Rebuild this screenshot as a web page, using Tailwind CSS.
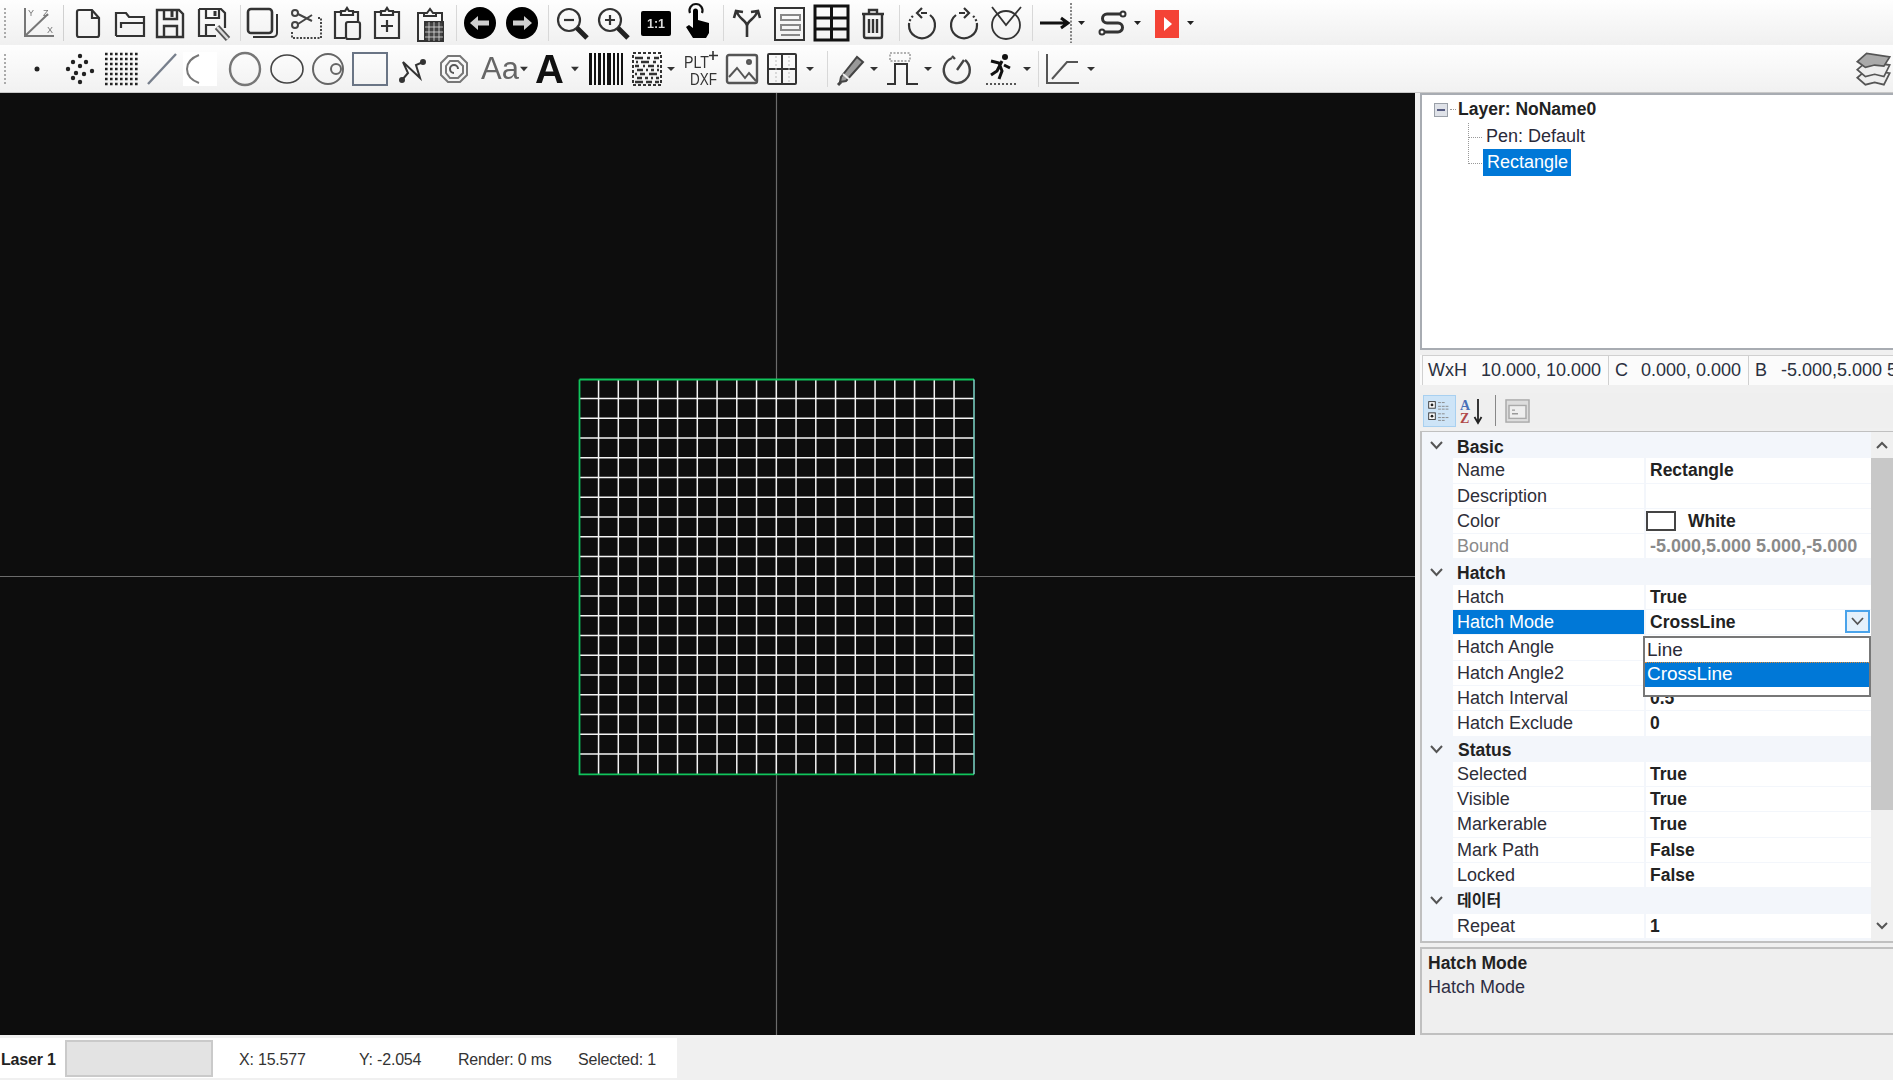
<!DOCTYPE html>
<html>
<head>
<meta charset="utf-8">
<script src="https://cdn.jsdelivr.net/npm/@tailwindcss/browser@4"></script>
</head>
<body class="m-0 overflow-hidden bg-[#f0f0f0]">
<div class="w-[1893px] h-[1080px] flex flex-col font-['Liberation_Sans','Noto_Sans_CJK_KR',sans-serif] text-[18px] text-[#222] bg-[#f0f0f0]">

<!-- toolbar 1 -->
<div class="h-[45px] flex items-center pl-[4px] bg-linear-to-b from-[#fefefe] to-[#f0f0f0] blur-[0.5px]">
  <div class="w-[3px] h-[30px] border-l-2 border-dotted border-[#aaa]"></div>
  <svg class="ml-[15px] w-[41px] h-8 overflow-visible" viewBox="0 0 32 32" preserveAspectRatio="xMinYMid meet" fill="none" stroke="#777" stroke-width="2"><path d="M3 1v28h29M3 29L26 7"/><text x="6" y="9" font-size="9" fill="#777" stroke="none">Y</text><text x="21" y="9" font-size="9" fill="#777" stroke="none">Z</text><text x="25" y="26" font-size="9" fill="#777" stroke="none">X</text></svg>
  <div class="w-px h-[36px] bg-[#d0d0d0]"></div>
  <svg class="ml-[8px] w-[42px] h-8 overflow-visible" viewBox="0 0 32 32" preserveAspectRatio="xMinYMid meet" fill="none" stroke="#333" stroke-width="2.200"><path d="M5 5a2 2 0 0 1 2-2h13l7 8v17a2 2 0 0 1-2 2H7a2 2 0 0 1-2-2zM20 3v8h7"/></svg>
  <svg class="w-[40px] h-8 overflow-visible" viewBox="0 0 32 32" preserveAspectRatio="xMinYMid meet" fill="none" stroke="#333" stroke-width="2.200"><path d="M2 29V6h10l3 4h15v6M2 29h28V16H7v5"/></svg>
  <svg class="w-[43px] h-8 overflow-visible" viewBox="0 0 32 32" preserveAspectRatio="xMinYMid meet" fill="none" stroke="#333" stroke-width="2.400"><path d="M3 3h22l4 4v23H3zM10 3v9h13V3M10 30V19h13v11"/><path d="M18 4v6" stroke-width="3"/></svg>
  <svg class="w-[43px] h-8 overflow-visible" viewBox="0 0 32 32" preserveAspectRatio="xMinYMid meet" fill="none" stroke="#333" stroke-width="2.200"><path d="M2 2h22l4 4v15M2 2v27h17M9 2v9h13V2M9 29V18h9"/><path d="M18 4v5" stroke-width="3"/><path d="M20 20l11 12" stroke="#555" stroke-width="6"/><path d="M20 20l11 12" stroke="#ddd" stroke-width="2.500"/></svg>
  <div class="w-px h-[36px] bg-[#d8d8d8]"></div>
  <svg class="ml-[5px] w-[44px] h-8 overflow-visible" viewBox="0 0 32 32" preserveAspectRatio="xMinYMid meet" fill="none" stroke="#333" stroke-width="2"><rect x="2" y="2" width="24" height="24" rx="3" stroke-width="2.600"/><path d="M7 30h20a4 4 0 0 0 4-4V7"/></svg>
  <svg class="w-[41px] h-8 overflow-visible" viewBox="0 0 32 32" preserveAspectRatio="xMinYMid meet" fill="none" stroke="#444" stroke-width="2"><circle cx="5" cy="6" r="3"/><circle cx="5" cy="18" r="3"/><path d="M8 7l14 7M8 17l14-9"/><path d="M2 25v6h29V11h-4" stroke-dasharray="2 1.500"/></svg>
  <svg class="w-[40px] h-8 overflow-visible" viewBox="0 0 32 32" preserveAspectRatio="xMinYMid meet" fill="none" stroke="#333" stroke-width="2.200"><path d="M10 5H4v26h10M22 5h5v9"/><path d="M10 8V4h4l2-3 2 3h4v4z"/><rect x="15" y="15" width="14" height="17" rx="2"/></svg>
  <svg class="w-[43px] h-8 overflow-visible" viewBox="0 0 32 32" preserveAspectRatio="xMinYMid meet" fill="none" stroke="#333" stroke-width="2.200"><path d="M10 5H4v26h24V5h-6"/><path d="M10 8V4h4l2-3 2 3h4v4z"/><path d="M16 13v12M10 19h12"/></svg>
  <svg class="w-[42px] h-8 overflow-visible" viewBox="0 0 32 32" preserveAspectRatio="xMinYMid meet" fill="none" stroke="#333" stroke-width="2"><path d="M10 6H4v28h24V6h-6"/><path d="M10 9V6h3l3-4 3 4h3v3z"/><rect x="11" y="15" width="18" height="19" fill="#444"/><path d="M15 15v19M20 15v19M25 15v19M11 20h18M11 25h18M11 30h18" stroke="#ddd" stroke-width="0.800"/></svg>
  <div class="w-px h-[36px] bg-[#d8d8d8]"></div>
  <svg class="ml-[7px] w-[42px] h-8 overflow-visible" viewBox="0 0 32 32" preserveAspectRatio="xMinYMid meet"><circle cx="16" cy="16" r="16" fill="#000"/><path d="M6 16l8-7v4.500h11v5H14v4.500z" fill="#cfcfcf"/></svg>
  <svg class="w-[42px] h-8 overflow-visible" viewBox="0 0 32 32" preserveAspectRatio="xMinYMid meet"><circle cx="16" cy="16" r="16" fill="#000"/><path d="M26 16l-8-7v4.500H7v5h11v4.500z" fill="#cfcfcf"/></svg>
  <div class="w-px h-[36px] bg-[#d8d8d8]"></div>
  <svg class="ml-[7px] w-[41px] h-8 overflow-visible" viewBox="0 0 32 32" preserveAspectRatio="xMinYMid meet" fill="none" stroke="#333" stroke-width="2.200"><circle cx="13" cy="13" r="11"/><path d="M21 21l10 10" stroke-width="5" stroke="#222"/><path d="M8 13h10"/></svg>
  <svg class="w-[43px] h-8 overflow-visible" viewBox="0 0 32 32" preserveAspectRatio="xMinYMid meet" fill="none" stroke="#333" stroke-width="2.200"><circle cx="13" cy="13" r="11"/><path d="M21 21l10 10" stroke-width="5" stroke="#222"/><path d="M8 13h10M13 8v10"/></svg>
  <svg class="w-[41px] h-8 overflow-visible" viewBox="0 0 32 32" preserveAspectRatio="xMinYMid meet"><rect x="1" y="4" width="30" height="25" rx="2" fill="#000"/><text x="16" y="21" font-size="12.500" font-weight="700" fill="#ddd" text-anchor="middle" font-family="Liberation Sans">1:1</text></svg>
  <svg class="w-[42px] h-8 overflow-visible" viewBox="0 0 32 32" preserveAspectRatio="xMinYMid meet" fill="none" stroke="#111" stroke-width="2.200"><path d="M9 6a6.500 6.500 0 1 1 12 0"/><path d="M12 31L5 20l3-2 4 3V4a2.500 2.500 0 0 1 5 0v9l11 3v10l-3 5z" fill="#000" stroke="none"/></svg>
  <div class="w-px h-[36px] bg-[#d8d8d8]"></div>
  <svg class="ml-[7px] w-[42px] h-8 overflow-visible" viewBox="0 0 32 32" preserveAspectRatio="xMinYMid meet" fill="none" stroke="#333" stroke-width="2.600"><path d="M16 30V19C16 14 8 12 6 5M16 19c0-5 8-7 10-14M3 11l2-7 7 1M29 11l-2-7-7 1"/></svg>
  <svg class="w-[42px] h-8 overflow-visible" viewBox="0 0 32 32" preserveAspectRatio="xMinYMid meet" fill="none" stroke="#333" stroke-width="2"><rect x="2" y="1" width="29" height="32"/><path d="M8 8h19v5H8zM8 18h19v5H8zM8 28h19" stroke="#888"/></svg>
  <svg class="w-[42px] h-8 overflow-visible" viewBox="0 0 32 32" preserveAspectRatio="xMinYMid meet" fill="none" stroke="#111" stroke-width="3"><rect x="0" y="-1" width="33" height="34"/><path d="M16.500 -1v34M0 11h33M0 22h33"/></svg>
  <svg class="w-[42px] h-8 overflow-visible" viewBox="0 0 32 32" preserveAspectRatio="xMinYMid meet" fill="none" stroke="#333" stroke-width="2.400"><path d="M5 7h22M12 7V3h8v4M7 7v22a2 2 0 0 0 2 2h14a2 2 0 0 0 2-2V7M12 12v14M16 12v14M20 12v14"/></svg>
  <div class="w-px h-[36px] bg-[#d8d8d8]"></div>
  <svg class="ml-[6px] w-[42px] h-8 overflow-visible" viewBox="0 0 32 32" preserveAspectRatio="xMinYMid meet" fill="none" stroke="#333" stroke-width="2.200"><path d="M24 8a13 13 0 1 1-21 10"/><path d="M3 18A13 13 0 0 1 8 8" stroke-dasharray="2 2"/><path d="M21 6h-6M16 1l-5 5 5 5"/></svg>
  <svg class="w-[42px] h-8 overflow-visible" viewBox="0 0 32 32" preserveAspectRatio="xMinYMid meet" fill="none" stroke="#333" stroke-width="2.200"><path d="M8 8a13 13 0 1 0 21 10"/><path d="M29 18a13 13 0 0 0-5-10" stroke-dasharray="2 2"/><path d="M11 6h6M16 1l5 5-5 5"/></svg>
  <svg class="w-[42px] h-8 overflow-visible" viewBox="0 0 32 32" preserveAspectRatio="xMinYMid meet" fill="none" stroke="#333" stroke-width="1.800"><circle cx="16" cy="18" r="14"/><path d="M2 0l14 18L31 0"/></svg>
  <div class="w-px h-[36px] bg-[#d8d8d8]"></div>
  <svg class="ml-[7px] w-[56px] h-8 overflow-visible" viewBox="0 0 32 32" preserveAspectRatio="xMinYMid meet" fill="none" stroke="#111" stroke-width="3"><path d="M0 16h27M21 11l7 5-7 5"/><path d="M31 -4v40" stroke-width="1" stroke-dasharray="2 1.500"/><path d="M38 14h7l-3.500 4z" fill="#222" stroke="none"/></svg>
  <svg class="w-[55px] h-8 overflow-visible" viewBox="0 0 32 32" preserveAspectRatio="xMinYMid meet" fill="none" stroke="#333" stroke-width="3"><path d="M27 7H11a4.500 4.500 0 0 0 0 9h11a4.500 4.500 0 0 1 0 9H7"/><circle cx="27" cy="7" r="2.500" fill="#fff" stroke-width="2"/><circle cx="6" cy="25" r="2.500" fill="#fff" stroke-width="2"/><path d="M38 14h7l-3.500 4z" fill="#222" stroke="none"/></svg>
  <svg class="w-[60px] h-8 overflow-visible" viewBox="0 0 32 32" preserveAspectRatio="xMinYMid meet"><rect x="4" y="3" width="24" height="28" fill="#f44336"/><path d="M13 10l8 7-8 7z" fill="#fff"/><path d="M36 14h7l-3.500 4z" fill="#222"/></svg>
</div>

<!-- toolbar 2 -->
<div class="h-[48px] flex items-center pl-[4px] bg-linear-to-b from-[#fefefe] to-[#f1f1f1] border-b border-[#c8c8c8] blur-[0.5px]">
  <div class="w-[3px] h-[30px] border-l-2 border-dotted border-[#aaa]"></div>
  <svg class="ml-[14px] w-[43px] h-8 overflow-visible" viewBox="0 0 32 32" preserveAspectRatio="xMinYMid meet"><circle cx="16" cy="16" r="2.500" fill="#222"/></svg>
  <svg class="w-[41px] h-8 overflow-visible" viewBox="0 0 32 32" preserveAspectRatio="xMinYMid meet" fill="#222"><circle cx="16" cy="3" r="2.200"/><circle cx="9" cy="9" r="2.200"/><circle cx="22" cy="9" r="2.200"/><circle cx="16" cy="13" r="2.200"/><circle cx="4" cy="16" r="2.200"/><circle cx="28" cy="18" r="2.200"/><circle cx="12" cy="20" r="2.200"/><circle cx="20" cy="21" r="2.200"/><circle cx="9" cy="25" r="2.200"/><circle cx="16" cy="29" r="2.200"/></svg>
  <svg class="w-[41px] h-8 overflow-visible" viewBox="0 0 32 32" preserveAspectRatio="xMinYMid meet" fill="none" stroke="#222" stroke-width="2.600" stroke-dasharray="2.600 2.400"><path d="M0 1h34M0 6h34M0 11h34M0 16h34M0 21h34M0 26h34M0 31h34"/></svg>
  <svg class="w-[37px] h-8 overflow-visible" viewBox="0 0 32 32" preserveAspectRatio="xMinYMid meet" fill="none" stroke="#777f8c" stroke-width="2.400"><path d="M2 31L30 1"/></svg>
  <svg class="w-[46px] h-8 overflow-visible" viewBox="0 0 32 32" preserveAspectRatio="xMinYMid meet"><rect x="0" y="-1" width="34" height="34" fill="#fff"/><path d="M16 2C0 8 0 24 16 30" fill="none" stroke="#777" stroke-width="2"/></svg>
  <svg class="w-[42px] h-8 overflow-visible" viewBox="0 0 32 32" preserveAspectRatio="xMinYMid meet" fill="none" stroke="#777" stroke-width="2.400"><ellipse cx="16" cy="16" rx="15" ry="16"/></svg>
  <svg class="w-[41px] h-8 overflow-visible" viewBox="0 0 32 32" preserveAspectRatio="xMinYMid meet" fill="none" stroke="#444" stroke-width="1.600"><ellipse cx="16" cy="16" rx="16" ry="14"/></svg>
  <svg class="w-[42px] h-8 overflow-visible" viewBox="0 0 32 32" preserveAspectRatio="xMinYMid meet" fill="none" stroke="#666" stroke-width="2"><circle cx="16" cy="16" r="15"/><circle cx="24" cy="16" r="5"/></svg>
  <svg class="w-[42px] h-8 overflow-visible" viewBox="0 0 32 32" preserveAspectRatio="xMinYMid meet" fill="none" stroke="#6a7585" stroke-width="2"><rect x="-1" y="0" width="34" height="32"/></svg>
  <svg class="w-[42px] h-8 overflow-visible" viewBox="0 0 32 32" preserveAspectRatio="xMinYMid meet" fill="none" stroke="#333" stroke-width="2"><path d="M6 27l6-7-5-11 17 16-4-13 7-3"/><circle cx="6" cy="27" r="2" fill="#333"/><circle cx="27" cy="9" r="2" fill="#333"/></svg>
  <svg class="w-[43px] h-8 overflow-visible" viewBox="0 0 32 32" preserveAspectRatio="xMinYMid meet" fill="none" stroke="#777" stroke-width="2"><path d="M10 3h12l7 7v12l-7 7H10l-7-7V10z"/><path d="M12 8h8l5 5v7l-5 5h-8l-4-5v-7z"/><path d="M16 20a4 4 0 1 1 4-4" stroke="#555"/></svg>
  <div class="w-[53px] h-8 flex items-center overflow-visible"><span class="text-[31px] leading-8 text-[#666] font-['Liberation_Sans']">Aa</span><svg class="w-[9px] h-2 ml-[1px] shrink-0" viewBox="0 0 8 6"><path d="M0 1h7L3.500 5z" fill="#333"/></svg></div>
  <div class="w-[55px] h-8 flex items-center overflow-visible"><span class="w-[30px] ml-[1px] text-[40px] leading-8 font-bold text-[#111] font-['Liberation_Sans']">A</span><svg class="w-[9px] h-2 ml-[6px] shrink-0" viewBox="0 0 8 6"><path d="M0 1h7L3.500 5z" fill="#333"/></svg></div>
  <svg class="w-[42px] h-8 overflow-visible" viewBox="0 0 32 32" preserveAspectRatio="xMinYMid meet" fill="#111"><path d="M0 0h3v32H0zM5 0h2v32H5zM9 0h3v32H9zM14 0h2v32h-2zM18 0h4v32h-4zM24 0h2v32h-2zM28 0h2v32h-2zM32 0h2v32h-2z"/></svg>
  <svg class="w-[54px] h-8 overflow-visible" viewBox="0 0 32 32" preserveAspectRatio="xMinYMid meet" fill="none" stroke="#333" stroke-width="2.400"><rect x="2" y="0" width="28" height="32" stroke-width="2" stroke-dasharray="3 2"/><path d="M4 5h6l2 0M16 5h3M23 5h5M5 9h2M10 9h8M22 9h3M4 13h4M12 13h2M17 13h6M26 13h2M6 17h6M15 17h2M20 17h3M26 17h2M4 21h2M9 21h5M18 21h8M6 25h5M14 25h3M20 25h2M25 25h3M4 29h8M15 29h6M24 29h4"/><path d="M36 14h8l-4 4z" fill="#333" stroke="none"/></svg>
  <svg class="w-[41px] h-8 overflow-visible" viewBox="0 0 32 32" preserveAspectRatio="xMinYMid meet"><text x="-1" y="15" font-size="17" fill="#333" font-family="Liberation Sans" textLength="25" lengthAdjust="spacingAndGlyphs">PLT</text><text x="5" y="32" font-size="17" fill="#333" font-family="Liberation Sans" textLength="27" lengthAdjust="spacingAndGlyphs">DXF</text><path d="M28 -2v9M24 2.500h9" stroke="#333" stroke-width="1.600"/></svg>
  <svg class="w-[41px] h-8 overflow-visible" viewBox="0 0 32 32" preserveAspectRatio="xMinYMid meet" fill="none" stroke="#555" stroke-width="2"><rect x="1" y="2" width="30" height="28" rx="2" stroke-width="2.400"/><path d="M3 24l8-9 8 10 4-5 7 8"/><circle cx="23" cy="9" r="2" fill="#666"/></svg>
  <svg class="w-[60px] h-8 overflow-visible" viewBox="0 0 32 32" preserveAspectRatio="xMinYMid meet" fill="none" stroke="#333" stroke-width="2"><rect x="1" y="1" width="28" height="30" rx="1"/><path d="M15 1v30M1 16h28"/><path d="M9 3v26M22 3v26" stroke="#bbb" stroke-width="1" stroke-dasharray="2 2"/><path d="M39 14h8l-4 4z" fill="#333" stroke="none"/></svg>
  <div class="w-px h-[36px] bg-[#d8d8d8]"></div>
  <svg class="ml-[7px] w-[51px] h-8 overflow-visible" viewBox="0 0 32 32" preserveAspectRatio="xMinYMid meet" fill="none" stroke="#444" stroke-width="2"><path d="M6 24L22 4l6 5L11 28l-6 1z" fill="#999"/><path d="M8 21l7 6" stroke="#eee"/><path d="M3 32l3-3" stroke-width="3"/><path d="M35 14h8l-4 4z" fill="#333" stroke="none"/></svg>
  <svg class="w-[55px] h-8 overflow-visible" viewBox="0 0 32 32" preserveAspectRatio="xMinYMid meet" fill="none" stroke="#333" stroke-width="2"><path d="M1 31h8V11h12v20h11"/><rect x="4" y="0" width="20" height="8" stroke="#666" stroke-width="1" stroke-dasharray="2 1.500"/><path d="M38 14h8l-4 4z" fill="#333" stroke="none"/></svg>
  <svg class="w-[43px] h-8 overflow-visible" viewBox="0 0 32 32" preserveAspectRatio="xMinYMid meet" fill="none" stroke="#444" stroke-width="2.400"><path d="M11 5a13 13 0 1 0 13 2M14 6l-3-3M16 17l7-10"/></svg>
  <svg class="w-[54px] h-8 overflow-visible" viewBox="0 0 32 32" preserveAspectRatio="xMinYMid meet" fill="none" stroke="#111" stroke-width="3"><circle cx="21" cy="4" r="3" fill="#111" stroke="none"/><path d="M7 8l8 2 3 8-3 8M18 8l-5 10-6 4M20 12l6 3"/><path d="M2 31h30" stroke="#555" stroke-width="2" stroke-dasharray="2 2"/><path d="M39 14h8l-4 4z" fill="#333" stroke="none"/></svg>
  <div class="w-px h-[36px] bg-[#d8d8d8]"></div>
  <svg class="ml-[7px] w-[60px] h-8 overflow-visible" viewBox="0 0 32 32" preserveAspectRatio="xMinYMid meet" fill="none" stroke="#555" stroke-width="2"><path d="M1 1v29h32"/><path d="M6 26l15-17h11"/><path d="M41 14h8l-4 4z" fill="#333" stroke="none"/></svg>
  <svg class="ml-auto mr-[1px] w-[37px] h-[37px]" viewBox="0 0 32 32" stroke="#555" stroke-width="1.500"><path d="M2 24l8-7 20 3-5 10-8-2-8 2z" fill="#eee"/><path d="M2 17l8-7 20 3-5 10-8-2-8 2z" fill="#eee"/><path d="M2 10l8-7 20 3-5 8-8-1-8 2z" fill="#aaa"/></svg>
</div>

<!-- main -->
<div class="h-[942px] flex">
  <!-- canvas -->
  <div class="w-[1415px] h-full bg-[#0d0d0d]">
    <svg class="w-full h-full" viewBox="0 93 1415 942" fill="none">
      <path d="M776.500 93V1035M0 576.500H1415" stroke="#6b6b6b" stroke-width="1.200"/>
      <path stroke="#f4f4f4" stroke-width="1.500" d="M598.550 379V774M618.300 379V774M638.050 379V774M657.800 379V774M677.550 379V774M697.300 379V774M717.050 379V774M736.800 379V774M756.550 379V774M776.300 379V774M796.050 379V774M815.800 379V774M835.550 379V774M855.300 379V774M875.050 379V774M894.800 379V774M914.550 379V774M934.300 379V774M954.050 379V774M579 398.550H974M579 418.300H974M579 438.050H974M579 457.800H974M579 477.550H974M579 497.300H974M579 517.050H974M579 536.800H974M579 556.550H974M579 576.300H974M579 596.050H974M579 615.800H974M579 635.550H974M579 655.300H974M579 675.050H974M579 694.800H974M579 714.550H974M579 734.300H974M579 754.050H974"/>
      <path stroke="#10c45c" stroke-width="1.800" d="M579.500 379.500H974M579.500 379.500V774.300H974"/>
      <path stroke="#7cd6c8" stroke-width="1.500" d="M974 379.500V774.300"/>
    </svg>
  </div>
  <!-- right panel -->
  <div class="ml-[5px] w-[473px] h-full flex flex-col">
    <!-- tree -->
    <div class="h-[257px] shrink-0 bg-white border-t-2 border-l-2 border-b-2 border-[#a8acb2]">
      <div class="h-[27px] flex items-center mt-[1px]">
        <span class="ml-[12px] w-[14px] h-[14px] border border-[#9aa0a8] bg-[#dfe2e8] flex items-center justify-center"><span class="w-[8px] h-[2px] bg-[#555b80]"></span></span>
        <span class="w-[6px] mx-[2px] border-t border-dotted border-[#999]"></span>
        <span class="font-bold text-[17.5px]">Layer: NoName0</span>
      </div>
      <div class="flex items-start ml-[46px] h-[53px]">
        <div class="w-[14px] h-[41px] border-l border-dotted border-[#999] flex flex-col">
          <div class="h-[15px] w-[13px] border-b border-dotted border-[#999]"></div>
          <div class="h-[26px] w-[13px] border-b border-dotted border-[#999]"></div>
        </div>
        <div class="flex flex-col">
          <div class="h-[26px] leading-[26px] pl-[4px] text-[#2a2a3a]">Pen: Default</div>
          <div class="h-[27px] leading-[27px] pl-[4px] ml-px w-[88px] bg-[#0078d7] text-white">Rectangle</div>
        </div>
      </div>
    </div>
    <!-- info -->
    <div class="mt-[5px] h-[30px] shrink-0 bg-[#fbfbfb] flex overflow-hidden text-[#2a3040] text-[18px] leading-[28px] whitespace-nowrap">
      <div class="ml-[2px] w-[186px] border-l border-t border-[#d0d0d0] flex shrink-0"><span class="pl-[5px] w-[58px]">WxH</span><span>10.000, 10.000</span></div>
      <div class="w-[140px] border-l border-t border-[#d0d0d0] flex shrink-0"><span class="pl-[6px] w-[32px]">C</span><span>0.000, 0.000</span></div>
      <div class="border-l border-t border-[#d0d0d0] flex shrink-0"><span class="pl-[6px] w-[32px]">B</span><span>-5.000,5.000 5.000,-5.000</span></div>
    </div>
    <!-- prop toolbar -->
    <div class="mt-[8px] h-[35px] shrink-0 flex items-center bg-[#efefef]">
      <svg class="ml-[3px] w-[33px] h-[32px] bg-[#cde4f7] border border-[#a8d0f0]" viewBox="0 0 33 32" fill="none"><rect x="5" y="6" width="7" height="7" fill="#fff" stroke="#333"/><rect x="5" y="18" width="7" height="7" fill="#fff" stroke="#333"/><circle cx="8.500" cy="9.500" r="1.500" fill="#222"/><circle cx="8.500" cy="21.500" r="1.500" fill="#222"/><path d="M15 7h7M15 11h12M15 14h12M15 19h7M15 23h12M15 26h8" stroke="#888" stroke-dasharray="3 1"/></svg>
      <svg class="ml-[3px] w-[30px] h-[32px]" viewBox="0 0 30 32" fill="none"><text x="1" y="15" font-size="14" font-weight="700" fill="#4a70b8" font-family="Liberation Serif">A</text><text x="1" y="28" font-size="14" font-weight="700" fill="#b04848" font-family="Liberation Serif">Z</text><path d="M19 4v22M15.500 22l3.500 6 3.500-6" stroke="#222" stroke-width="1.800"/></svg>
      <div class="ml-[6px] w-px h-[31px] bg-[#888]"></div>
      <svg class="ml-[9px] w-[25px] h-[24px]" viewBox="0 0 25 26" preserveAspectRatio="none" fill="#ddd" stroke="#aaa" stroke-width="1.500"><rect x="1" y="1" width="23" height="24"/><rect x="4" y="7" width="17" height="14" fill="#eee"/><path d="M7 12h3M7 16h6" stroke="#999"/></svg>
    </div>
    <!-- property grid -->
    <div class="mt-[3px] h-[512px] shrink-0 border-t border-l-2 border-b-2 border-[#c0c0c0] bg-[#f3f6fb] flex relative">
      <div class="w-[449px] pt-px flex flex-col">
        <div class="h-[25.3px] flex items-center font-bold text-[17.5px]"><svg class="ml-[8px] w-[13px] h-[9px]" viewBox="0 0 13 9" fill="none"><path d="M1 1l5.500 6L12 1" stroke="#555" stroke-width="2"/></svg><span class="ml-[14px] pt-[2px]">Basic</span></div>
        <div class="h-[25.3px] flex"><div class="ml-[31px] w-[191px] pl-[4px] bg-white border-b border-[#f3f6fb] leading-[25px] text-[#2e2e38]">Name</div><div class="ml-[2px] w-[225px] pl-[4px] bg-white border-b border-[#f3f6fb] leading-[25px] font-bold text-[17.5px]">Rectangle</div></div>
        <div class="h-[25.3px] flex"><div class="ml-[31px] w-[191px] pl-[4px] bg-white border-b border-[#f3f6fb] leading-[25px] text-[#2e2e38]">Description</div><div class="ml-[2px] w-[225px] pl-[4px] bg-white border-b border-[#f3f6fb] leading-[25px] font-bold text-[17.5px]"></div></div>
        <div class="h-[25.3px] flex"><div class="ml-[31px] w-[191px] pl-[4px] bg-white border-b border-[#f3f6fb] leading-[25px] text-[#2e2e38]">Color</div><div class="ml-[2px] w-[225px] bg-white border-b border-[#f3f6fb] leading-[25px] font-bold text-[17.5px] flex items-center"><span class="w-[30px] h-[20px] border-2 border-[#444] bg-white"></span><span class="ml-[12px]">White</span></div></div>
        <div class="h-[25.3px] flex"><div class="ml-[31px] w-[191px] pl-[4px] bg-white border-b border-[#f3f6fb] leading-[25px] text-[#8a8a8a]">Bound</div><div class="ml-[2px] w-[225px] pl-[4px] bg-white border-b border-[#f3f6fb] leading-[25px] font-bold text-[18px] text-[#8a8a8a] whitespace-nowrap">-5.000,5.000 5.000,-5.000</div></div>
        <div class="h-[25.3px] flex items-center font-bold text-[17.5px]"><svg class="ml-[8px] w-[13px] h-[9px]" viewBox="0 0 13 9" fill="none"><path d="M1 1l5.500 6L12 1" stroke="#555" stroke-width="2"/></svg><span class="ml-[14px] pt-[2px]">Hatch</span></div>
        <div class="h-[25.3px] flex"><div class="ml-[31px] w-[191px] pl-[4px] bg-white border-b border-[#f3f6fb] leading-[25px] text-[#2e2e38]">Hatch</div><div class="ml-[2px] w-[225px] pl-[4px] bg-white border-b border-[#f3f6fb] leading-[25px] font-bold text-[17.5px]">True</div></div>
        <div class="h-[25.3px] flex"><div class="ml-[31px] w-[191px] pl-[4px] bg-[#0078d7] border-b border-[#f3f6fb] leading-[25px] text-white">Hatch Mode</div><div class="ml-[2px] w-[225px] pl-[4px] bg-white border-b border-[#f3f6fb] leading-[25px] font-bold text-[17.5px] flex justify-between">CrossLine<span class="w-[25px] h-[23px] border-2 border-[#4aa3ea] bg-[#e5f1fb] flex items-center justify-center mr-[1px]"><svg class="w-[13px] h-[9px]" viewBox="0 0 13 9" fill="none"><path d="M1 1l5.500 6L12 1" stroke="#555" stroke-width="1.800"/></svg></span></div></div>
        <div class="h-[25.3px] flex"><div class="ml-[31px] w-[191px] pl-[4px] bg-white border-b border-[#f3f6fb] leading-[25px] text-[#2e2e38]">Hatch Angle</div><div class="ml-[2px] w-[225px] pl-[4px] bg-white border-b border-[#f3f6fb] leading-[25px] font-bold text-[17.5px]"></div></div>
        <div class="h-[25.3px] flex"><div class="ml-[31px] w-[191px] pl-[4px] bg-white border-b border-[#f3f6fb] leading-[25px] text-[#2e2e38]">Hatch Angle2</div><div class="ml-[2px] w-[225px] pl-[4px] bg-white border-b border-[#f3f6fb] leading-[25px] font-bold text-[17.5px]"></div></div>
        <div class="h-[25.3px] flex"><div class="ml-[31px] w-[191px] pl-[4px] bg-white border-b border-[#f3f6fb] leading-[25px] text-[#2e2e38]">Hatch Interval</div><div class="ml-[2px] w-[225px] pl-[4px] bg-white border-b border-[#f3f6fb] leading-[25px] font-bold text-[17.5px]">0.5</div></div>
        <div class="h-[25.3px] flex"><div class="ml-[31px] w-[191px] pl-[4px] bg-white border-b border-[#f3f6fb] leading-[25px] text-[#2e2e38]">Hatch Exclude</div><div class="ml-[2px] w-[225px] pl-[4px] bg-white border-b border-[#f3f6fb] leading-[25px] font-bold text-[17.5px]">0</div></div>
        <div class="h-[25.3px] flex items-center font-bold text-[17.5px]"><svg class="ml-[8px] w-[13px] h-[9px]" viewBox="0 0 13 9" fill="none"><path d="M1 1l5.500 6L12 1" stroke="#555" stroke-width="2"/></svg><span class="ml-[15px] pt-[2px]">Status</span></div>
        <div class="h-[25.3px] flex"><div class="ml-[31px] w-[191px] pl-[4px] bg-white border-b border-[#f3f6fb] leading-[25px] text-[#2e2e38]">Selected</div><div class="ml-[2px] w-[225px] pl-[4px] bg-white border-b border-[#f3f6fb] leading-[25px] font-bold text-[17.5px]">True</div></div>
        <div class="h-[25.3px] flex"><div class="ml-[31px] w-[191px] pl-[4px] bg-white border-b border-[#f3f6fb] leading-[25px] text-[#2e2e38]">Visible</div><div class="ml-[2px] w-[225px] pl-[4px] bg-white border-b border-[#f3f6fb] leading-[25px] font-bold text-[17.5px]">True</div></div>
        <div class="h-[25.3px] flex"><div class="ml-[31px] w-[191px] pl-[4px] bg-white border-b border-[#f3f6fb] leading-[25px] text-[#2e2e38]">Markerable</div><div class="ml-[2px] w-[225px] pl-[4px] bg-white border-b border-[#f3f6fb] leading-[25px] font-bold text-[17.5px]">True</div></div>
        <div class="h-[25.3px] flex"><div class="ml-[31px] w-[191px] pl-[4px] bg-white border-b border-[#f3f6fb] leading-[25px] text-[#2e2e38]">Mark Path</div><div class="ml-[2px] w-[225px] pl-[4px] bg-white border-b border-[#f3f6fb] leading-[25px] font-bold text-[17.5px]">False</div></div>
        <div class="h-[25.3px] flex"><div class="ml-[31px] w-[191px] pl-[4px] bg-white border-b border-[#f3f6fb] leading-[25px] text-[#2e2e38]">Locked</div><div class="ml-[2px] w-[225px] pl-[4px] bg-white border-b border-[#f3f6fb] leading-[25px] font-bold text-[17.5px]">False</div></div>
        <div class="h-[25.3px] flex items-center font-bold"><svg class="ml-[8px] w-[13px] h-[9px]" viewBox="0 0 13 9" fill="none"><path d="M1 1l5.500 6L12 1" stroke="#555" stroke-width="2"/></svg><span class="ml-[14px] text-[16px]">데이터</span></div>
        <div class="h-[25.3px] flex"><div class="ml-[31px] w-[191px] pl-[4px] bg-white border-b border-[#f3f6fb] leading-[25px] text-[#2e2e38]">Repeat</div><div class="ml-[2px] w-[225px] pl-[4px] bg-white border-b border-[#f3f6fb] leading-[25px] font-bold text-[17.5px]">1</div></div>
      </div>
      <!-- scrollbar -->
      <div class="w-[22px] flex flex-col bg-[#f0f0f0]">
        <div class="h-[26px] flex items-center justify-center"><svg class="w-[12px] h-[8px]" viewBox="0 0 12 8" fill="none"><path d="M1 7l5-5 5 5" stroke="#555" stroke-width="2"/></svg></div>
        <div class="h-[352px] bg-[#c8c8c8]"></div>
        <div class="mt-auto h-[26px] flex items-center justify-center mb-[2px]"><svg class="w-[12px] h-[8px]" viewBox="0 0 12 8" fill="none"><path d="M1 1l5 5 5-5" stroke="#555" stroke-width="2"/></svg></div>
      </div>
      <!-- dropdown -->
      <div class="absolute left-[221px] top-[204px] w-[228px] h-[61px] bg-white border-2 border-[#777] flex flex-col text-[19px]">
        <div class="h-[24px] leading-[24px] pl-[2px] text-[#2a2a38]">Line</div>
        <div class="h-[25px] leading-[22px] pl-[2px] bg-[#0078d7] text-white border-t border-dotted border-[#e08a30]">CrossLine</div>
      </div>
    </div>
    <!-- help -->
    <div class="mt-[4px] h-[88px] shrink-0 bg-[#efefef] border-2 border-r-0 border-[#c0c0c0] pl-[6px] pt-[2px] leading-[24px]">
      <div class="font-bold text-[17.5px]">Hatch Mode</div>
      <div class="text-[#2e2e44]">Hatch Mode</div>
    </div>
  </div>
</div>

<!-- status bar -->
<div class="h-[45px] flex items-start">
  <div class="mt-[3px] w-[677px] h-[40px] bg-white flex items-center text-[16px] text-[#333] tracking-[-0.2px]">
    <span class="ml-[1px] w-[64px] font-bold text-[#222] pt-[3px]">Laser 1</span>
    <span class="w-[148px] h-[37px] bg-[#e3e3e3] border-2 border-[#cacaca]"></span>
    <span class="ml-[26px] w-[120px] pt-[3px]">X: 15.577</span>
    <span class="w-[99px] pt-[3px]">Y: -2.054</span>
    <span class="w-[120px] pt-[3px]">Render: 0 ms</span>
    <span class="pt-[3px]">Selected: 1</span>
  </div>
</div>
</div>
</body>
</html>
